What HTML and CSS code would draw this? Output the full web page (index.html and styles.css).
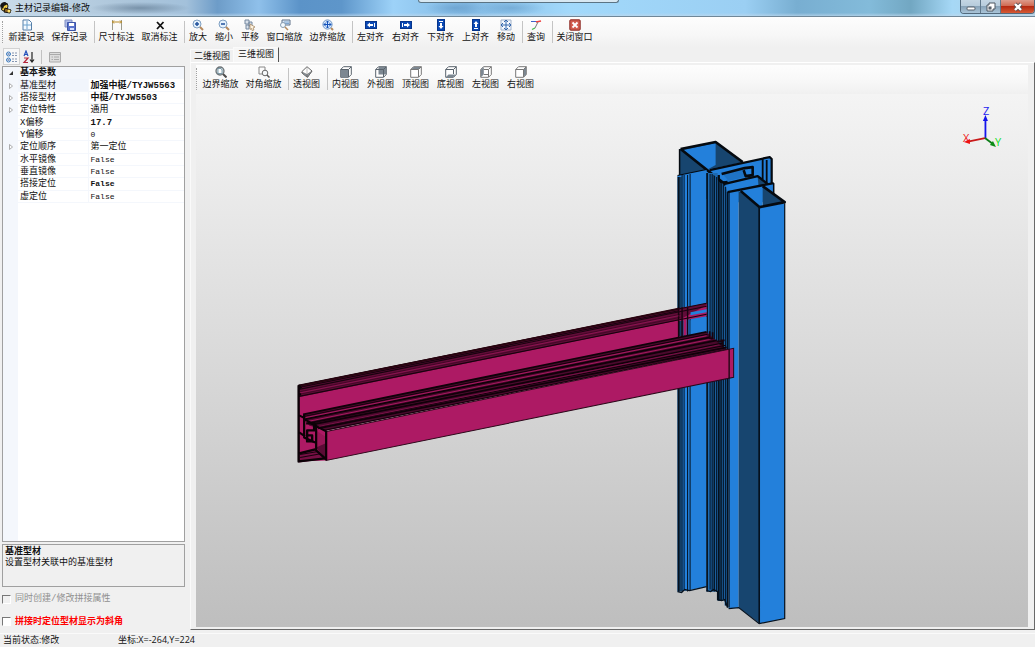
FILE: index.html
```html
<!DOCTYPE html>
<html lang="zh-CN">
<head>
<meta charset="utf-8">
<title>主材记录编辑-修改</title>
<link rel="stylesheet" href="styles.css">
</head>
<body>
<div class="app">
  <header class="titlebar">
    <svg class="app-icon" viewBox="0 0 12 12"><path d="M1 5Q1 1 5 1Q8 1 8 4L7 8L4 9Q1 9 1 5" fill="#f4cf42" stroke="#222"/><path d="M0 4Q1 0 5 0L8 2L4 4L3 7Z" fill="#151515"/><path d="M5 6L11 8L10 11L4 10Z" fill="#8d6422" stroke="#111"/><circle cx="9" cy="9" r="1.5" fill="#ffe36a"/></svg>
    <h1 class="title">主材记录编辑-修改</h1>
    <div class="window-buttons">
      <button class="win" aria-label="最小化"><svg viewBox="0 0 12 12"><rect x="2" y="6" width="8" height="3" rx="1" fill="#fff" stroke="#59636d"/></svg></button>
      <button class="win" aria-label="还原"><svg viewBox="0 0 12 12"><path d="M4 2H10V8H8V10H2V4H4Z" fill="#fff" stroke="#4c5660"/><rect x="4" y="6" width="2" height="2" fill="#7d8790" stroke="#4c5660"/></svg></button>
      <button class="win close" aria-label="关闭"><svg viewBox="0 0 12 12"><path d="M3 3L9 9M9 3L3 9" stroke="#5a4a4e" stroke-width="4"/><path d="M3 3L9 9M9 3L3 9" stroke="#fff" stroke-width="2.4"/></svg></button>
    </div>
    <div class="drawer"></div>
  </header>

  <nav class="toolbar" aria-label="主工具栏">
    <span class="grip"></span>
    <button class="tool w4"><svg viewBox="0 0 12 12"><path d="M2 1H8L10.500 3.500V11H2Z" fill="#f3f9ff" stroke="#557fa8"/><path d="M6 2V10M2 6H10" stroke="#6aa0cc"/></svg>新建记录</button>
    <button class="tool w4"><svg viewBox="0 0 12 12"><path d="M1 1H8V8H1Z" fill="#aebce8" stroke="#8190c4"/><path d="M3.500 3.500H11.500V11.500H3.500Z" fill="#5a73cc" stroke="#3d55a8"/><rect x="5" y="4" width="5" height="3" fill="#fff"/><rect x="6" y="9" width="4" height="2" fill="#d6e0ff"/></svg>保存记录</button>
    <span class="sep"></span>
    <button class="tool w4"><svg viewBox="0 0 12 12"><path d="M1.500 1V11M10.500 1V11" stroke="#9a9a8c"/><path d="M1 3H11M3 1.500L1.500 3L3 4.500M9 1.500L10.500 3L9 4.500" fill="none" stroke="#b88a24"/></svg>尺寸标注</button>
    <button class="tool w4"><svg viewBox="0 0 12 12"><path d="M3 3L9.500 10M9.500 3L3 10" stroke="#111" stroke-width="1.800"/></svg>取消标注</button>
    <span class="sep"></span>
    <button class="tool w2"><svg viewBox="0 0 12 12"><circle cx="5" cy="5" r="4" fill="#e4f1fc" stroke="#7fa0c2"/><path d="M3 5H7M5 3V7" stroke="#20519c" stroke-width="1.500"/><path d="M8 8L11 11" stroke="#b58a5e" stroke-width="2"/></svg>放大</button>
    <button class="tool w2"><svg viewBox="0 0 12 12"><circle cx="5" cy="5" r="4" fill="#e4f1fc" stroke="#7fa0c2"/><path d="M3 5H7" stroke="#20519c" stroke-width="1.500"/><path d="M8 8L11 11" stroke="#b58a5e" stroke-width="2"/></svg>缩小</button>
    <button class="tool w2"><svg viewBox="0 0 12 12"><path d="M1 1H5V5H1ZM5 3H8V7H5ZM2 6H5V10H2Z" fill="#d9e1eb" stroke="#75889f"/><path d="M6 5L11 8L9 9L10 11L8 11.500L7.500 9.500L6 10.500Z" fill="#fff3df" stroke="#9b7d56" stroke-width=".7"/></svg>平移</button>
    <button class="tool w4"><svg viewBox="0 0 12 12"><path d="M3 1H11V6H3Z" fill="#dbe8f6" stroke="#60738a"/><path d="M5 3H10M6 4.500H10" stroke="#7da4cf"/><circle cx="4" cy="6" r="2.500" fill="#f3faff" stroke="#879bb0"/><path d="M6 8L9 11" stroke="#b58a5e" stroke-width="1.500"/></svg>窗口缩放</button>
    <button class="tool w4"><svg viewBox="0 0 12 12"><circle cx="5.500" cy="5.500" r="4.600" fill="#d8eaff" stroke="#6b93c3"/><path d="M2 5.500H9M5.500 2V9M3.500 4L2 5.500L3.500 7M7.500 4L9 5.500L7.500 7M4 3.500L5.500 2L7 3.500M4 7.500L5.500 9L7 7.500" fill="none" stroke="#1552b8"/><path d="M9 9L11 11" stroke="#b58a5e" stroke-width="2"/></svg>边界缩放</button>
    <span class="sep"></span>
    <button class="tool w3"><svg viewBox="0 0 12 12"><rect x=".5" y="2.500" width="11" height="7" fill="#0a48b4" stroke="#06358c"/><path d="M2 6L5 3.500V5H8V7H5V8.500ZM9 4H10V8H9Z" fill="#fff"/></svg>左对齐</button>
    <button class="tool w3"><svg viewBox="0 0 12 12"><rect x=".5" y="2.500" width="11" height="7" fill="#0a48b4" stroke="#06358c"/><path d="M10 6L7 3.500V5H4V7H7V8.500ZM2 4H3V8H2Z" fill="#fff"/></svg>右对齐</button>
    <button class="tool w3"><svg viewBox="0 0 12 12"><rect x="2.500" y=".5" width="7" height="11" fill="#0a48b4" stroke="#06358c"/><path d="M6 10L3.500 7H5V4H7V7H8.500ZM4 2H8V3H4Z" fill="#fff"/></svg>下对齐</button>
    <button class="tool w3"><svg viewBox="0 0 12 12"><rect x="2.500" y=".5" width="7" height="11" fill="#0a48b4" stroke="#06358c"/><path d="M6 2L3.500 5H5V8H7V5H8.500ZM4 9H8V10H4Z" fill="#fff"/></svg>上对齐</button>
    <button class="tool w2"><svg viewBox="0 0 12 12"><path d="M1 1H11V11H1Z" fill="#f4f8ff" stroke="#a0b1c9"/><path d="M1 6H11M6 1V11M3 4L1 6L3 8M9 4L11 6L9 8M4 3L6 1L8 3M4 9L6 11L8 9" fill="none" stroke="#3568ac"/></svg>移动</button>
    <span class="sep"></span>
    <button class="tool w2"><svg viewBox="0 0 12 12"><path d="M1 2.500H7" stroke="#3d62c9"/><path d="M6 3L11 2" stroke="#ef4040" stroke-width="1.500"/><path d="M8 3L5 9" stroke="#777"/><path d="M5 9L2 10.500" stroke="#42b94d" stroke-width="1.300"/></svg>查询</button>
    <span class="sep"></span>
    <button class="tool w4"><svg viewBox="0 0 12 12"><rect x=".8" y=".8" width="10.400" height="10.400" rx="1" fill="#d25c4e" stroke="#8b2c26"/><path d="M3.500 3.500L8.500 8.500M8.500 3.500L3.500 8.500" stroke="#fff" stroke-width="1.800"/></svg>关闭窗口</button>
  </nav>

  <div class="workspace">
    <aside class="side">
      <div class="grid-tools">
        <button class="mini pressed" aria-label="按分类"><svg viewBox="0 0 14 14"><circle cx="3.500" cy="4" r="2" fill="#fff" stroke="#3979bd"/><circle cx="3.500" cy="10" r="2" fill="#fff" stroke="#3979bd"/><path d="M2.500 4H4.500M2.500 10H4.500" stroke="#173e85"/><path d="M7 3H9M10 3H12M7 5.500H9M10 5.500H12M7 9H9M10 9H12M7 11.500H9M10 11.500H12" stroke="#8495b2"/></svg></button>
        <button class="mini" aria-label="按字母排序"><svg viewBox="0 0 14 14"><path d="M2 6L4 1L6 6M3 4.500H5" fill="none" stroke="#2552ba" stroke-width="1.200"/><path d="M2 8H6L2 12.500H6" fill="none" stroke="#b32639" stroke-width="1.200"/><path d="M10 2V12M8 9.500L10 12L12 9.500" fill="none" stroke="#222" stroke-width="1.200"/></svg></button>
        <span class="mini-sep"></span>
        <button class="mini" disabled aria-label="属性页"><svg viewBox="0 0 14 14"><path d="M1.500 2.500H12.500V12H1.500Z" fill="#ddd" stroke="#aaa"/><path d="M2 4.500H12M3.500 7H5M6 7H11M3.500 9.500H5M6 9.500H11" stroke="#aaa"/></svg></button>
      </div>
      <div class="grid-box">
        <table class="props">
          <colgroup><col class="col-mark"><col class="col-name"><col></colgroup>
          <tbody>
          <tr class="cat"><td class="mark"><svg viewBox="0 0 6 6"><path d="M5 1V5H1Z" fill="#333"/></svg></td><th colspan="2">基本参数</th></tr>
          <tr><td class="mark"><svg viewBox="0 0 6 6"><path d="M1.500 .5L4.500 3L1.500 5.500Z" fill="#fff" stroke="#999" stroke-width=".8"/></svg></td><th class="sel">基准型材</th><td class="strong">加强中梃/TYJW5563</td></tr>
          <tr><td class="mark"><svg viewBox="0 0 6 6"><path d="M1.500 .5L4.500 3L1.500 5.500Z" fill="#fff" stroke="#999" stroke-width=".8"/></svg></td><th>搭接型材</th><td class="strong">中梃/TYJW5503</td></tr>
          <tr><td class="mark"><svg viewBox="0 0 6 6"><path d="M1.500 .5L4.500 3L1.500 5.500Z" fill="#fff" stroke="#999" stroke-width=".8"/></svg></td><th>定位特性</th><td>通用</td></tr>
          <tr><td class="mark"></td><th>X偏移</th><td class="strong">17.7</td></tr>
          <tr><td class="mark"></td><th>Y偏移</th><td class="latin">0</td></tr>
          <tr><td class="mark"><svg viewBox="0 0 6 6"><path d="M1.500 .5L4.500 3L1.500 5.500Z" fill="#fff" stroke="#999" stroke-width=".8"/></svg></td><th>定位顺序</th><td>第一定位</td></tr>
          <tr><td class="mark"></td><th>水平镜像</th><td class="latin">False</td></tr>
          <tr><td class="mark"></td><th>垂直镜像</th><td class="latin">False</td></tr>
          <tr><td class="mark"></td><th>搭接定位</th><td class="latin strong">False</td></tr>
          <tr><td class="mark"></td><th>虚定位</th><td class="latin">False</td></tr>
          </tbody>
        </table>
      </div>
      <section class="help"><h2>基准型材</h2><p>设置型材关联中的基准型材</p></section>
      <label class="check off"><input type="checkbox" disabled>同时创建/修改拼接属性</label>
      <label class="check red"><input type="checkbox">拼接时定位型材显示为斜角</label>
    </aside>

    <main class="view">
      <div class="tabs" role="tablist">
        <button class="tab" role="tab" aria-selected="false">二维视图</button>
        <button class="tab active" role="tab" aria-selected="true">三维视图</button>
      </div>
      <div class="page">
        <div class="toolbar view-tools">
          <span class="grip"></span>
          <button class="tool w4"><svg viewBox="0 0 12 12"><circle cx="5" cy="5" r="4" fill="#cfdde2" stroke="#6d7478" stroke-width="1.300"/><path d="M3 2.500H6L7 4V7.500H3Z" fill="#fff" stroke="#66899a" stroke-width=".8"/><path d="M8 8L11.500 11.500" stroke="#4c4c4c" stroke-width="2"/></svg>边界缩放</button>
          <button class="tool w4"><svg viewBox="0 0 12 12"><path d="M1 1H7V4M1 1V8H4" fill="none" stroke="#888"/><circle cx="7" cy="7" r="2.800" fill="#f5f8fa" stroke="#666"/><path d="M9 9L11.500 11.500" stroke="#555" stroke-width="1.500"/></svg>对角缩放</button>
          <span class="sep"></span>
          <button class="tool w3"><svg viewBox="0 0 12 12"><path d="M6 .7L11 5L6.500 11.300L1 7V5.500Z" fill="#fff" stroke="#666"/><path d="M1 6L6 8.500V11L1 7ZM6 8.500L11 5L6.500 11.300Z" fill="#8b969e" stroke="#666" stroke-width=".6"/><path d="M6 1V8.500" stroke="#999" stroke-width=".6"/></svg>透视图</button>
          <span class="sep"></span>
          <button class="tool w3"><svg viewBox="0 0 12 12"><path d="M.7 3.500L3.500 .7H11.300V8.500L8.500 11.300H.7Z" fill="#fff" stroke="#59636c"/><path d="M1 3.500H8.500V11H1Z" fill="#7c8791"/><path d="M.7 3.500H8.500L11.300 .7M8.500 3.500V11" fill="none" stroke="#59636c"/></svg>内视图</button>
          <button class="tool w3"><svg viewBox="0 0 12 12"><path d="M.7 3.500L3.500 .7H11.300V8.500L8.500 11.300H.7Z" fill="#fff" stroke="#59636c"/><path d="M3.500 1H11V8.500H3.500Z" fill="#7c8791"/><path d="M.7 3.500H8.500L11.300 .7M8.500 3.500V11" fill="none" stroke="#59636c"/></svg>外视图</button>
          <button class="tool w3"><svg viewBox="0 0 12 12"><path d="M.7 3.500L3.500 .7H11.300V8.500L8.500 11.300H.7Z" fill="#fff" stroke="#777"/><path d="M1 3.500L3.500 1H11L8.500 3.500Z" fill="#7c8791"/><path d="M.7 3.500H8.500L11.300 .7M8.500 3.500V11" fill="none" stroke="#777"/></svg>顶视图</button>
          <button class="tool w3"><svg viewBox="0 0 12 12"><path d="M.7 3.500L3.500 .7H11.300V8.500L8.500 11.300H.7Z" fill="#fff" stroke="#59636c"/><path d="M1 11L3.500 8.500H11L8.500 11Z" fill="#7c8791"/><path d="M.7 3.500H8.500L11.300 .7M8.500 3.500V8" fill="none" stroke="#59636c"/></svg>底视图</button>
          <button class="tool w3"><svg viewBox="0 0 12 12"><path d="M.7 3.500L3.500 .7H11.300V8.500L8.500 11.300H.7Z" fill="#fff" stroke="#777"/><path d="M1 3.500L3.800 1V8.500L1 11Z" fill="#7c8791"/><path d="M4 8.500H8M3.800 3.500H8.500L11.300 .7M8.500 3.500V11" fill="none" stroke="#777"/></svg>左视图</button>
          <button class="tool w3"><svg viewBox="0 0 12 12"><path d="M.7 3.500L3.500 .7H11.300V8.500L8.500 11.300H.7Z" fill="#fff" stroke="#777"/><path d="M8.500 3.500L11 1V8.500L8.500 11Z" fill="#7c8791"/><path d="M.7 3.500H8.500L11.300 .7M8.500 3.500V11" fill="none" stroke="#777"/></svg>右视图</button>
        </div>
        <div class="canvas">
          <svg class="scene" viewBox="196 95 831 532" role="img" aria-label="三维型材模型">
            <!-- column: rear box and rear flange -->
            <path d="M679 150L715 143L750 171V200H679Z" fill="#17456f"/>
            <path d="M683 151L715 144V166L706 171Z" fill="#2380db"/>
            <path d="M703 171L769 158L771 160V186L720 192Z" fill="#2380db"/>
            <path d="M722 175L744 170V178L728 182Z" fill="#1f73c4"/>
            <g fill="none" stroke="#050a10" stroke-linejoin="round">
              <path d="M679 150V177" stroke-width="1.500"/>
              <path d="M680 150L715 143L742 163M680 150L728 188" stroke-width="2.600"/>
              <path d="M677 177L706 171M709 171L769 158L771 160V184" stroke-width="2.200"/>
              <path d="M762 160V180M766 161V184" stroke-width="1.800"/>
              <path d="M721 175L744 169L752 168V176L745 177L743 171M718 176V184L727 183" stroke-width="2.600"/>
            </g>
            <!-- column: long faces -->
            <path d="M677 177L706 171V587L687 591L677 592Z" fill="#2380db"/>
            <path d="M706 174H717V592H706ZM717 182L727 190V606H724V601H717Z" fill="#1d69b1"/>
            <path d="M718 184H722V601H718ZM712 176H714V592H712ZM677 178H681V592H677Z" fill="#133e65"/>
            <path d="M724 185L757 177L768 186L727 193Z" fill="#2380db"/>
            <path d="M757 178L767 186L758 188Z" fill="#17456f"/>
            <path d="M727 193L773 184V203H727Z" fill="#2380db"/>
            <path d="M727 193H738V608L728 609Z" fill="#2380db"/>
            <path d="M739 192L762 187V208H758Z" fill="#2380db"/>
            <path d="M762 188L783 203L762 207Z" fill="#17456f"/>
            <path d="M738 192L759 208V624L738 608Z" fill="#17456f"/>
            <path d="M759 208L784 204V619L758 624Z" fill="#2380db"/>
            <g fill="none" stroke="#050a10" stroke-linejoin="round">
              <path d="M723 185L757 177L767 185M727 193L773 184" stroke-width="2.400"/>
              <path d="M773 184V195" stroke-width="1.500"/>
              <path d="M740 192L759 208L784 203L762 187" stroke-width="2.600"/>
            </g>
            <g fill="none" stroke="#05111e">
              <path d="M678 178V592M706.500 174V592M718 182V601M727 193V608M758.500 208V624" stroke-width="1.700"/>
              <path d="M681.500 176V592M683.500 176V590M687 176V592M689.500 175V591M709.500 175V590M711.500 175V591M714 177V592M716 178V592M720.500 184V601M723 186V600M725 188V606M728.500 194V608" stroke-width="1"/>
              <path d="M784 204V619L758.500 624L738 608L728 609" stroke-width="1.200"/>
              <path d="M677 592L681 593L684 590L689 591L706 587M706 591L710 592L713 590L717 592V600L721 601L724 600L727 608" stroke-width="1.400"/>
            </g>
            <!-- crossbar: rear part, seen through the column -->
            <path d="M298 386L678 309V337L706 334L724 350L326 431V461L298 462Z" fill="#ad1a64"/>
            <path d="M678 309L706 304V317L678 322ZM683 310H686V336H683Z" fill="#ad1a64"/>
            <path d="M298 386L706 304V306L678 321L298 398Z" fill="#610c38"/>
            <path d="M690 313L706 310V313L690 316Z" fill="#2380db"/>
            <path d="M690 321L706 317.500V333L690 336Z" fill="#2380db"/>
            <g fill="none" stroke="#18030e" stroke-width="1.200">
              <path d="M298 386L706 304M299 388L678 311.500M299 390L706 307M299 397L706 315"/>
              <path d="M299 392.500L680 315M299 395L680 318" stroke="#3c0622" stroke-width=".8"/>
              <path d="M678 308V340M681.500 308V340M687 308V337" stroke-width="1.400"/>
            </g>
            <path d="M299 393.700L678 316.500" stroke="#9a1759" stroke-width=".7"/>
            <path d="M299 386.500L678 309.500" stroke="#27040f" stroke-width="1.800"/>
            <!-- crossbar: middle ribs -->
            <path d="M303 415L706 333L726 350L326 431L309 426Z" fill="#4a092c"/>
            <g fill="none" stroke="#100109">
              <path d="M303 415L706 332.500M304 420L709 338M308 424L716 341M313 425L722 344M318 429L726 348" stroke-width="1.800"/>
              <path d="M304 417L707 335M320 427L725 346M323 431L727 350" stroke-width="1"/>
            </g>
            <path d="M304 418.500L706 336.500M308 422L710 340" stroke="#b21b67" stroke-width=".9"/>
            <path d="M318 427L719 345.500" stroke="#7a1148" stroke-width="1"/>
            <path d="M709 332V339H712V333M716 342H722V348M720 341H724" fill="none" stroke="#18030e" stroke-width="1.700"/>
            <!-- crossbar: front face -->
            <path d="M326 432L733 349V378L326 461Z" fill="#ad1a64" stroke="#2b0719" stroke-width="1"/>
            <path d="M728.500 350V379" stroke="#1b0410" stroke-width="1.300"/>
            <!-- crossbar: end section -->
            <path d="M299 453L315 450L326 459L299 463Z" fill="#780f45"/>
            <path d="M300 455L318 452M300 458L322 454" stroke="#16030d"/>
            <path d="M316 431L325 437V458L316 450Z" fill="#991657"/>
            <path d="M316 448L325 444V459Z" fill="#5b0b35"/>
            <g fill="none" stroke="#0b0106" stroke-linejoin="round">
              <path d="M298.500 386V462L325 459M298.500 386L301 389M298.500 395H301" stroke-width="2.400"/>
              <path d="M299 416L305 419M299 433L305 437M304 415V438L315 443M304 420L316 426V451L326 460V432L309 423" stroke-width="2.200"/>
              <path d="M306 424H314V431H307V442H312V436H306M299 454L315 450" stroke-width="2.400"/>
            </g>
            <!-- axes -->
            <path d="M984.500 139V121" stroke="#1414ec" stroke-width="1.800"/><path d="M982 122L984.500 116L987 122Z" fill="#1414ec"/>
            <path d="M984 139L967 142.500" stroke="#c91818" stroke-width="1.800"/><path d="M963 143L969 140V145Z" fill="#ee1111"/>
            <path d="M984 139L992 145" stroke="#0b7c15" stroke-width="1.800"/><path d="M995 148L989 146L992 142Z" fill="#0a8d14"/>
            <text class="axis" x="982" y="116" fill="#2525f0">Z</text>
            <text class="axis" x="962" y="143" fill="#ee1515">X</text>
            <text class="axis" x="994" y="147" fill="#12df25">Y</text>
          </svg>
        </div>
      </div>
    </main>
  </div>
  <footer class="status"><span class="state">当前状态:修改</span><span>坐标:X=-264,Y=224</span></footer>
</div>
</body>
</html>
```
FILE: styles.css
```css
* { box-sizing: border-box; }
body {
  margin: 0;
  background: #f0f0f0;
  color: #111;
  font: 9px/12px "Open Sans", "Noto Sans CJK SC", sans-serif;
}
button { margin: 0; padding: 0; border: 0; background: none; color: inherit; font: inherit; }
svg { display: block; }
h1, h2, p { margin: 0; font: inherit; }

.app { display: flex; flex-direction: column; min-height: 100vh; }

.titlebar {
  position: relative;
  display: flex;
  align-items: center;
  height: 17px;
  border-bottom: 1px solid #6f8798;
  background:
    linear-gradient(transparent 80%, rgba(190, 215, 235, .7)),
    radial-gradient(ellipse 50px 6px at 140px 8px, rgba(70, 95, 120, .5), transparent),
    radial-gradient(ellipse 30px 7px at 455px 8px, rgba(60, 115, 165, .3), transparent),
    radial-gradient(ellipse 34px 7px at 512px 8px, rgba(60, 115, 165, .3), transparent),
    linear-gradient(90deg, #c9dbe9 0, #adc6db 12%, #a3c1db 18%, #6d9cc8 21%, #8fc0ea 25%, #5b93c8 29%, #5e96ca 33%, #9dd2f8 38%, #82b9e3 45%, #a2d9fb 55%, #9bcff3 72%, #78aed1 77%, #83bbda 84%, #72a7c2 88%, #a6d8f6 92%, #b5cfdf 100%);
}
.app-icon { width: 12px; height: 12px; }
.title { flex: 1; margin-left: 3px; color: #111; line-height: 16px; }
.window-buttons { display: flex; align-self: flex-start; height: 14px; border: 1px solid #52697c; border-top: 0; border-radius: 0 0 4px 4px; overflow: hidden; }
.win { display: flex; align-items: center; justify-content: center; width: 20px; background: linear-gradient(#c4d6e3, #b7ccdc 45%, #89a4b9 50%, #a9c4d8); border-right: 1px solid #60788b; }
.win svg { width: 12px; height: 12px; }
.win.close { width: 33px; border-right: 0; background: linear-gradient(#dd9b8b, #cf6a53 45%, #b52a12 50%, #d65a35); }
.drawer { position: absolute; left: 40.4%; top: 0; width: 19.4%; height: 3px; border: 1px solid #5b7484; border-top: 0; border-radius: 0 0 3px 3px; background: #d8e8f2; }

.toolbar { display: flex; align-items: flex-start; height: 30px; padding: 2px 0 0 2px; background: linear-gradient(#fdfdfd, #f7f7f7 60%, #f0f0f0); }
.grip { width: 1px; height: 22px; margin: 2px 2px 0 0; border-left: 1px dotted #a0a0a0; }
.tool { display: flex; flex-direction: column; align-items: center; white-space: nowrap; }
.tool svg { width: 12px; height: 12px; }
.w2 { width: 26px; }
.w3 { width: 35px; }
.w4 { width: 43px; }
.sep { width: 1px; height: 22px; margin: 2px 0 0 3px; background: #c4c4c4; }

.workspace { display: flex; flex: 1; }
.side { display: flex; flex-direction: column; width: 188px; padding: 0 3px 0 2px; }
.grid-tools { display: flex; align-items: center; height: 19px; padding-left: 1px; }
.mini { display: flex; align-items: center; justify-content: center; width: 17px; height: 17px; }
.mini svg { width: 14px; height: 14px; }
.pressed { border: 1px solid #d2d2d2; background: #f8f8f8; }
.mini-sep { width: 1px; height: 14px; margin: 0 4px; background: #c2c2c2; }
.grid-box { flex: 1; border: 1px solid #a0a0a0; background: linear-gradient(90deg, #f4f7fc 15px, #fff 15px); }
.props { width: 100%; height: 136px; border-collapse: collapse; table-layout: fixed; line-height: 10px; font-family: "Liberation Mono", "Noto Sans CJK SC", monospace; }
.col-mark { width: 15px; }
.col-name { width: 70px; }
.props td, .props th { padding: 1px 0 0 2px; border-bottom: 1px solid #f4f7fc; font-weight: 400; text-align: left; white-space: nowrap; }
.props .mark { padding-left: 5px; border: 0; }
.mark svg { width: 6px; height: 6px; }
.props th { border-right: 1px solid #f4f7fc; }
.props .strong, .props .cat th { font-weight: 700; }
.cat { background: #f4f7fc; }
.props .sel { background: #f1f5fc; }
.props .latin { font-size: 8px; }
.help { height: 43px; margin: 2px 0 6px; padding: 0 2px; border: 1px solid #a0a0a0; }
.help h2 { font-weight: 700; line-height: 11px; }
.check { display: flex; align-items: center; gap: 4px; height: 12px; margin-bottom: 10px; }
.check + .check { margin-bottom: 6px; }
.check input { appearance: none; width: 9px; height: 9px; margin: 0; border: 1px solid #fff; border-top-color: #777; border-left-color: #777; background: #fff; }
.check.off { color: #8f8f8f; font-family: "Liberation Mono", "Noto Sans CJK SC", monospace; }
.check.off input { background: #f0f0f0; }
.check.red { color: #f00; font-weight: 700; }

.view { display: flex; flex: 1; flex-direction: column; min-width: 0; padding: 0 0 3px 2px; }
.tabs { display: flex; height: 15px; align-items: flex-end; }
.tab { width: 43px; height: 13px; border-top: 1px solid #fafafa; border-left: 1px solid #fafafa; }
.tab.active { width: 46px; height: 15px; padding-bottom: 2px; border-right: 1px solid #555; background: #f6f6f6; }
.page { display: flex; flex: 1; flex-direction: column; padding: 2px 6px 2px 5px; border: 1px solid #696969; border-top-color: #fff; border-left-color: #fafafa; }
.view-tools { height: 29px; padding: 1px 0 0; }
.canvas { flex: 1; background: linear-gradient(#f4f4f4, #bebebe); }
.scene { width: 100%; height: auto; }
.axis { font: 11px "Open Sans", sans-serif; }

.status { display: flex; height: 14px; padding: 0 3px; border-top: 1px solid #fafafa; line-height: 12px; }
.state { width: 115px; }
```
